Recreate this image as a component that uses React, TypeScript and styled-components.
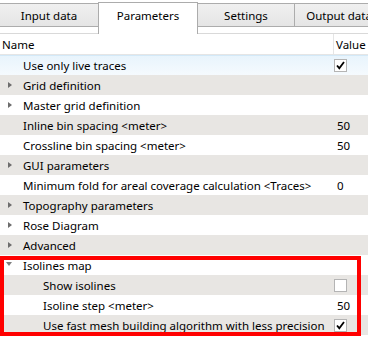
import React from "react";
import styled, { createGlobalStyle } from "styled-components";

const Global = createGlobalStyle`
  html, body { margin: 0; padding: 0; background: #ffffff; }
  body { font-family: "Noto Sans", "Open Sans", sans-serif; font-size: 11.5px; color: #000; }
  #root { width: 368px; height: 350px; overflow: hidden; }
`;

const Window = styled.div`
  width: 368px;
  height: 350px;
  display: flex;
  flex-direction: column;
  background: #ffffff;
  overflow: hidden;
`;

const TabBar = styled.div`
  display: flex;
  align-items: flex-end;
  height: 34px;
  background: #ffffff;
  border-bottom: 1px solid #d9d9d9;
  box-sizing: border-box;
  white-space: nowrap;
`;

const Tab = styled.div<{ $active?: boolean; $w: number }>`
  box-sizing: border-box;
  flex: 0 0 ${(p) => p.$w}px;
  height: ${(p) => (p.$active ? 32 : 24)}px;
  margin-bottom: ${(p) => (p.$active ? -1 : 6)}px;
  display: flex;
  align-items: center;
  justify-content: center;
  padding-bottom: ${(p) => (p.$active ? 7 : 0)}px;
  border: 1px solid #acacac;
  border-bottom: ${(p) => (p.$active ? "none" : "1px solid #acacac")};
  margin-left: -1px;
  background: ${(p) => (p.$active ? "#ffffff" : "linear-gradient(#f0f0f0, #e5e5e5)")};
  color: #000;
  overflow: hidden;
`;

const Header = styled.div`
  display: grid;
  grid-template-columns: 333px 1fr;
  height: 21px;
  border-bottom: 1px solid #e5e5e5;
  box-sizing: border-box;
  background: #fff;
`;

const HeaderCell = styled.div<{ $divider?: boolean }>`
  display: flex;
  align-items: center;
  padding-left: 2px;
  border-left: ${(p) => (p.$divider ? "1px solid #e5e5e5" : "none")};
  white-space: nowrap;
`;

const Rows = styled.div`
  display: flex;
  flex-direction: column;
`;

const Row = styled.div<{ $alt?: boolean; $selected?: boolean }>`
  display: grid;
  grid-template-columns: 333px 1fr;
  height: 20px;
  box-sizing: border-box;
  background: ${(p) =>
    p.$selected
      ? "linear-gradient(#e8f4fc, #f5fafe)"
      : p.$alt
      ? "#e8e6e3"
      : "#ffffff"};
  border-top: ${(p) => (p.$selected ? "1px solid #d3e9f8" : "none")};
`;

const NameCell = styled.div<{ $level: number }>`
  position: relative;
  display: flex;
  align-items: center;
  padding-left: ${(p) => 23 + p.$level * 20}px;
  white-space: nowrap;
  overflow: hidden;
`;

const ValueCell = styled.div`
  display: flex;
  align-items: center;
  padding-left: 4px;
`;

const Arrow = styled.span<{ $open?: boolean }>`
  position: absolute;
  left: ${(p) => (p.$open ? 6 : 8)}px;
  top: 50%;
  width: 0;
  height: 0;
  ${(p) =>
    p.$open
      ? `border-left: 3.5px solid transparent; border-right: 3.5px solid transparent; border-top: 4px solid #7f7f7f; margin-top: -3px;`
      : `border-top: 3.5px solid transparent; border-bottom: 3.5px solid transparent; border-left: 4px solid #6d6d6d; margin-top: -3.5px;`}
`;

const Box = styled.span`
  width: 13px;
  height: 13px;
  box-sizing: border-box;
  border: 1px solid #b4b4b4;
  background: #fff;
  display: flex;
  align-items: center;
  justify-content: center;
  margin-left: -3px;
`;

const Group = styled.div`
  position: relative;
  display: flex;
  flex-direction: column;
  &::after {
    content: "";
    position: absolute;
    top: 1px;
    left: 0;
    right: 7px;
    bottom: -1px;
    border: 4px solid #ff0000;
    pointer-events: none;
  }
`;

const Check = ({ checked }: { checked: boolean }) => (
  <Box>
    {checked && (
      <svg width="9" height="9" viewBox="0 0 9 9">
        <path d="M1 4.5 L3.3 7.2 L8 1" fill="none" stroke="#000" strokeWidth="1.8" />
      </svg>
    )}
  </Box>
);

type Item = {
  name: string;
  level: number;
  arrow?: "closed" | "open";
  value?: string;
  check?: boolean;
  selected?: boolean;
};

const items: Item[] = [
  { name: "Use only live traces", level: 0, check: true, selected: true },
  { name: "Grid definition", level: 0, arrow: "closed" },
  { name: "Master grid definition", level: 0, arrow: "closed" },
  { name: "Inline bin spacing <meter>", level: 0, value: "50" },
  { name: "Crossline bin spacing <meter>", level: 0, value: "50" },
  { name: "GUI parameters", level: 0, arrow: "closed" },
  { name: "Minimum fold for areal coverage calculation <Traces>", level: 0, value: "0" },
  { name: "Topography parameters", level: 0, arrow: "closed" },
  { name: "Rose Diagram", level: 0, arrow: "closed" },
  { name: "Advanced", level: 0, arrow: "closed" },
];

const group: Item[] = [
  { name: "Isolines map", level: 0, arrow: "open" },
  { name: "Show isolines", level: 1, check: false },
  { name: "Isoline step <meter>", level: 1, value: "50" },
  { name: "Use fast mesh building algorithm with less precision", level: 1, check: true },
];

const renderRow = (it: Item, idx: number) => (
  <Row key={it.name} $alt={idx % 2 === 1} $selected={it.selected}>
    <NameCell $level={it.level}>
      {it.arrow && <Arrow $open={it.arrow === "open"} />}
      {it.name}
    </NameCell>
    <ValueCell>
      {it.check !== undefined ? <Check checked={it.check} /> : it.value}
    </ValueCell>
  </Row>
);

export default function App() {
  return (
    <Window>
      <Global />
      <TabBar>
        <Tab $w={100}>Input data</Tab>
        <Tab $w={100} $active>
          Parameters
        </Tab>
        <Tab $w={98}>Settings</Tab>
        <Tab $w={90}>Output data</Tab>
      </TabBar>
      <Header>
        <HeaderCell>Name</HeaderCell>
        <HeaderCell $divider>Value</HeaderCell>
      </Header>
      <Rows>
        {items.map((it, i) => renderRow(it, i))}
        <Group>{group.map((it, i) => renderRow(it, items.length + i))}</Group>
      </Rows>
    </Window>
  );
}
